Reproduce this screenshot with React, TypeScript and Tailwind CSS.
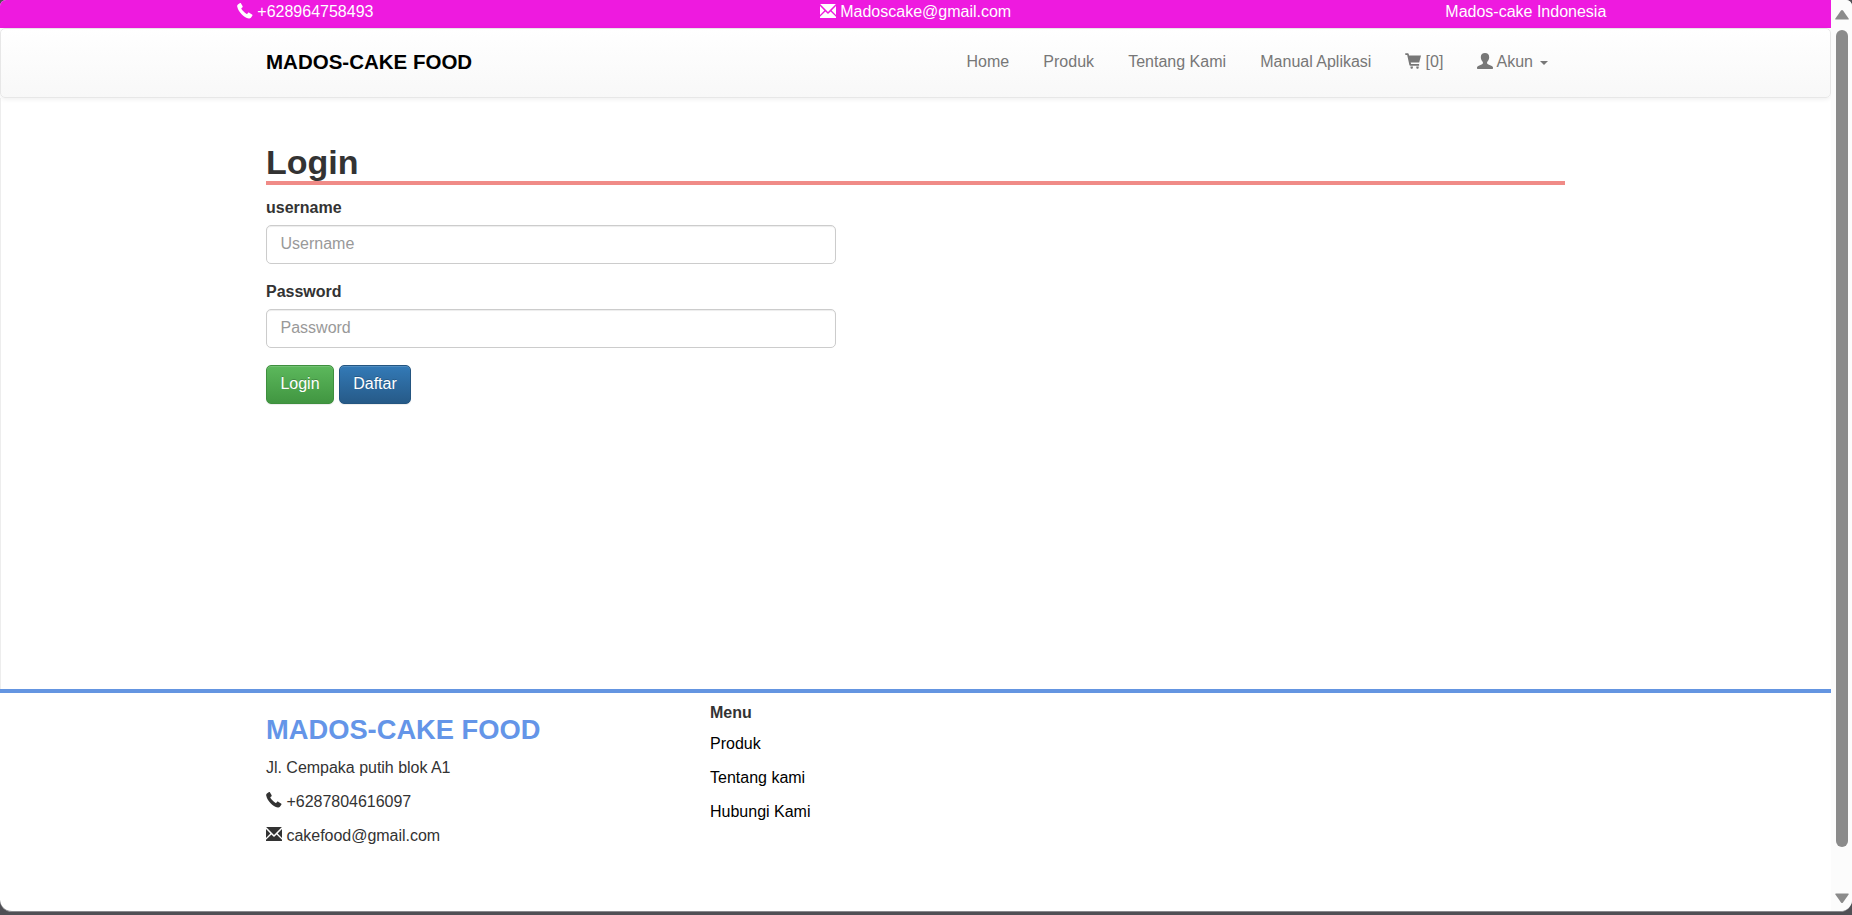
import React from "react";

type IconProps = { className?: string };

const Phone = ({ className = "" }: IconProps) => (
  <svg viewBox="0 0 16 16" fill="currentColor" className={`inline-block h-4 w-4 ${className}`}>
    <path d="M.9 1.500 2.700.2c.5-.3 1-.3 1.300.2l1.500 2.700c.3.500.2 1-.2 1.300l-.8.500c-.3.300-.2.600 0 1 .5.900 1.200 1.800 2.100 2.700s1.800 1.700 2.700 2.200c.4.200.8.300 1 0l.7-.9c.3-.4.8-.4 1.200-.2l2.800 1.700c.5.300.6.800.3 1.300l-1.400 2c-.4.600-1.200.900-2 .8-2.800-.6-5.300-2.300-7.300-4.300C2.600 9.200.8 6.500.2 3.600c-.2-.9.1-1.600.7-2.100z" />
  </svg>
);

const Envelope = ({ className = "" }: IconProps) => (
  <svg viewBox="0 0 16 16" fill="currentColor" className={`inline-block h-4 w-4 ${className}`}>
    <path d="M.1 1h15.800L8 9zM0 3l4.400 4.500L0 12zM16 3v9l-4.400-4.500zM5.400 8.500 8 11l2.600-2.500L16 13.700V15H0v-1.300z" />
  </svg>
);

const Cart = ({ className = "" }: IconProps) => (
  <svg viewBox="0 0 16 16" fill="currentColor" className={`inline-block h-4 w-4 ${className}`}>
    <path d="M.8.300h2c.5 0 .8.200.9.700L4.100 2.500H16L14.200 9.600H5.700l.4 1.500h8v1.600H5.300c-.5 0-.8-.3-.9-.7L2.200 1.900H.8C.3 1.900 0 1.600 0 1.100S.3.300.8.300zM5.500 13.500h2.400v1c0 .7-.5 1.300-1.200 1.300s-1.200-.6-1.200-1.300zM11.300 13.500h2.400v1c0 .7-.5 1.300-1.200 1.300s-1.200-.6-1.200-1.300z" />
  </svg>
);

const User = ({ className = "" }: IconProps) => (
  <svg viewBox="0 0 16 16" fill="currentColor" className={`inline-block h-4 w-4 shrink-0 ${className}`}>
    <path d="M8 0c2.500 0 4.200 1.500 4.200 4.100 0 2-.8 3.900-2.100 5v1.200c0 .5.300.8.800 1l3.900 1.800c.8.400 1.200.800 1.200 1.500v.7c0 .400-.2.700-.6.700H.6c-.4 0-.6-.3-.6-.7v-.7c0-.7.400-1.100 1.200-1.500l3.900-1.800c.5-.2.800-.5.800-1V9.100c-1.300-1.100-2.100-3-2.100-5C3.800 1.500 5.500 0 8 0z" />
  </svg>
);

const field =
  "block h-[39px] w-[570px] rounded-[5px] border border-[#ccc] bg-white px-[13.500px] text-base text-[#555] shadow-[inset_0_1px_1px_rgba(0,0,0,0.075)] outline-none placeholder:text-[#999] placeholder:opacity-100";
const button =
  "h-[39px] rounded-[5px] border px-[13px] pb-px text-base text-white [text-shadow:0_-1px_0_rgba(0,0,0,0.2)] shadow-[inset_0_1px_0_rgba(255,255,255,0.15),0_1px_1px_rgba(0,0,0,0.075)]";

export default function App() {
  return (
    <div className="h-[915px] w-[1852px] overflow-hidden bg-[#505055] pb-[3px] font-['Liberation_Sans',Arial,sans-serif] text-base leading-[22.800px] text-[#333]">
      <div className="flex h-[912px] overflow-hidden rounded-t-[6px] rounded-b-[12px] border-b border-[#8a8a8e] bg-white">
        <div className="w-[1831px] shrink-0">
          <div className="grid h-7 grid-cols-3 bg-[#ee1adf] pt-px text-center text-white">
            <div><Phone className="align-[-2px]" /> +628964758493</div>
            <div><Envelope className="align-[-2px]" /> Madoscake@gmail.com</div>
            <div>Mados-cake Indonesia</div>
          </div>

          <nav className="h-[70px] rounded-[5px] border border-[#e7e7e7] bg-linear-to-b from-white to-[#f8f8f8] shadow-[inset_0_1px_0_rgba(255,255,255,0.15),0_1px_5px_rgba(0,0,0,0.075)]">
            <div className="mx-auto flex w-[1299px] justify-between pt-[22px]">
              <a className="text-[20.500px] font-bold text-black">MADOS-CAKE FOOD</a>
              <div className="flex gap-[34.200px] pr-[17px] text-[#777]">
                <a>Home</a>
                <a>Produk</a>
                <a>Tentang Kami</a>
                <a>Manual Aplikasi</a>
                <a className="-ml-[0.500px]"><Cart className="align-[-2px]" /> [0]</a>
                <a className="-ml-[0.300px] flex items-center">
                  <User className="mr-[3.300px] mb-[2px]" />Akun
                  <span className="ml-[7px] mt-[2px] border-x-4 border-t-4 border-x-transparent border-t-[#777]" />
                </a>
              </div>
            </div>
          </nav>

          <div className="h-[591px] shadow-[inset_1px_0_0_#ededed]">
            <main className="mx-auto w-[1299px] pt-[45px]">
              <h2 className="h-[42px] border-b-4 border-[#f08b87] text-[34px] leading-[38px] font-bold">Login</h2>
              <form>
                <label className="mt-[11.600px] mb-[5.400px] block font-bold">username</label>
                <input className={field} placeholder="Username" />
                <label className="mt-[17.200px] mb-[5px] block font-bold">Password</label>
                <input className={field} type="password" placeholder="Password" />
                <div className="mt-[17px] flex gap-[5px]">
                  <button type="button" className={`${button} w-[68px] border-[#3e8f3e] bg-linear-to-b from-[#5cb85c] to-[#419641]`}>Login</button>
                  <button type="button" className={`${button} w-[72px] border-[#245580] bg-linear-to-b from-[#337ab7] to-[#265a88]`}>Daftar</button>
                </div>
              </form>
            </main>
          </div>

          <footer className="border-t-4 border-[#6495e1]">
            <div className="mx-auto flex w-[1299px]">
              <div className="w-[444px] shrink-0 pt-[22px]">
                <h3 className="mb-[12px] text-[27.300px] leading-[30px] font-bold text-[#6495e8]">MADOS-CAKE FOOD</h3>
                <p className="mb-[11.200px] tracking-[-0.020px]">Jl. Cempaka putih blok A1</p>
                <p className="mb-[11.200px] tracking-[-0.020px]"><Phone className="relative -top-px align-[-2px]" /> +6287804616097</p>
                <p className="tracking-[-0.020px]"><Envelope className="relative -top-px align-[-2px]" /> cakefood@gmail.com</p>
              </div>
              <div className="pt-[9.200px]">
                <h5 className="mb-[8px] font-bold">Menu</h5>
                <ul className="flex flex-col gap-[11.200px] text-black">
                  <li>Produk</li>
                  <li>Tentang kami</li>
                  <li>Hubungi Kami</li>
                </ul>
              </div>
            </div>
          </footer>
        </div>

        <div className="flex w-[21px] flex-col items-center bg-[#fcfcfc] pt-[10px] pb-[8px]">
          <svg viewBox="0 0 14 10" className="h-[10px] w-[14px]" fill="#8b8b8b">
            <path d="M6 .6q1-1.200 2 0l5.600 7.800q.6 1.200-.6 1.200H1q-1.200 0-.6-1.200z" />
          </svg>
          <div className="mt-[10px] h-[817px] w-3 rounded-full bg-[#8b8b8b]" />
          <svg viewBox="0 0 14 10" className="mt-auto h-[10px] w-[14px]" fill="#8b8b8b">
            <path d="M6 9.400q1 1.200 2 0l5.600-7.800Q14.200.4 13 .4H1Q-.2.400.4 1.600z" />
          </svg>
        </div>
      </div>
    </div>
  );
}
